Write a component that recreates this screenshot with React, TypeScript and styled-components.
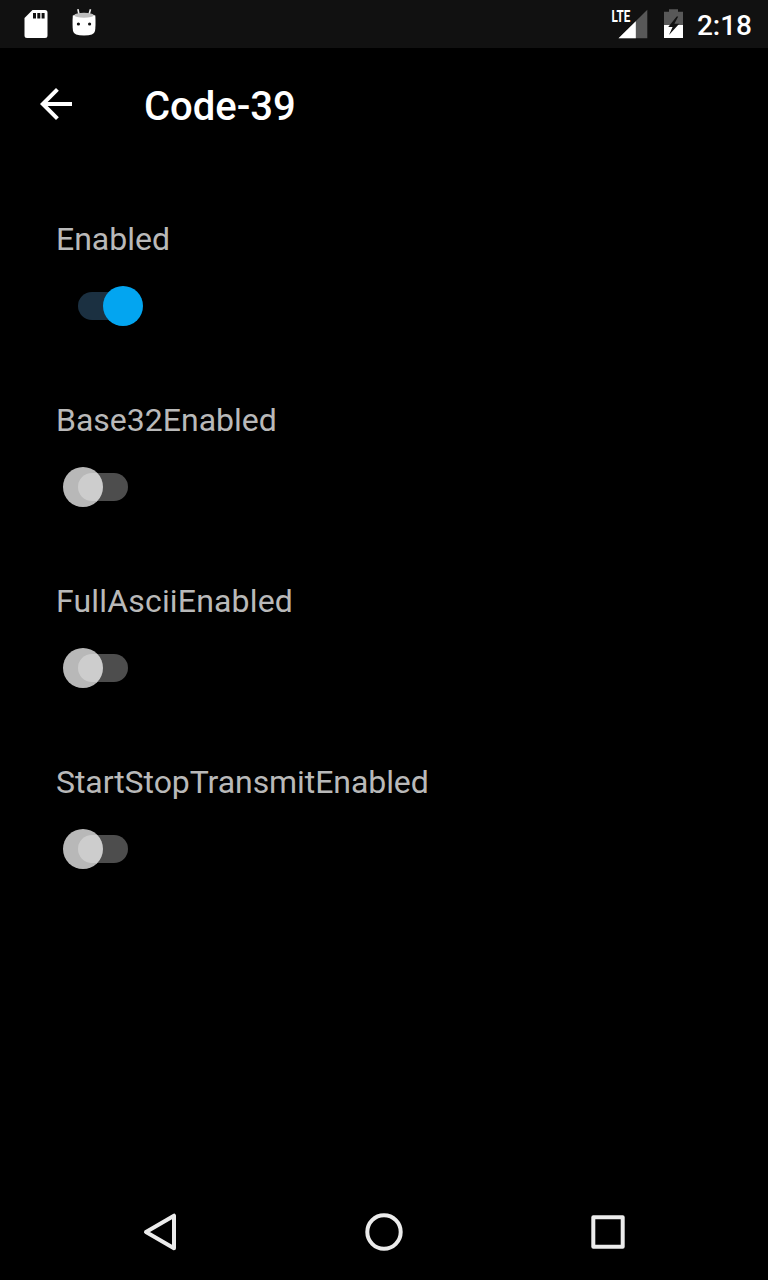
import React from "react";
import styled, { createGlobalStyle } from "styled-components";

const GlobalStyle = createGlobalStyle`
  html, body { margin: 0; background: #000; }
  * { box-sizing: border-box; }
  svg { display: block; flex: none; }
`;

const Screen = styled.div`
  display: flex;
  flex-direction: column;
  width: 768px;
  height: 1280px;
  background: #000;
  color: #fff;
  font-family: Roboto, sans-serif;
  overflow: hidden;
`;

const StatusBar = styled.header`
  display: flex;
  justify-content: space-between;
  height: 48px;
  padding: 0 16px 0 20px;
  background: #111;
`;

const StatusGroup = styled.div<{ $gap: number }>`
  display: flex;
  align-items: center;
  gap: ${({ $gap }) => $gap}px;
`;

const Clock = styled.time`
  padding-top: 3px;
  margin-left: -1px;
  font-size: 28px;
  font-weight: 500;
  line-height: 34px;
`;

const AppBar = styled.div`
  display: flex;
  align-items: center;
  gap: 64px;
  height: 112px;
  padding: 0 32px;
`;

const BackButton = styled.button`
  display: flex;
  width: 48px;
  height: 48px;
  padding: 0;
  border: 0;
  background: none;
  color: #fff;
`;

const Title = styled.h1`
  margin: 0;
  padding-top: 5px;
  font-size: 40px;
  font-weight: 500;
  line-height: 48px;
`;

const Settings = styled.main`
  display: flex;
  flex: 1;
  flex-direction: column;
  padding: 60px 56px 0;
`;

const Setting = styled.label`
  display: flex;
  flex-direction: column;
  gap: 28px;
  height: 181px;
`;

const SettingName = styled.span<{ $tracking: number }>`
  color: #b9b9b9;
  font-size: 32px;
  line-height: 38px;
  letter-spacing: ${({ $tracking }) => $tracking}px;
`;

const Switch = styled.span<{ $on: boolean }>`
  display: flex;
  align-items: center;
  width: 50px;
  height: 40px;
  margin-left: 22px;

  &::before {
    content: "";
    flex: none;
    width: 50px;
    height: 28px;
    border-radius: 14px;
    background: ${({ $on }) => ($on ? "#1b3041" : "#4d4d4d")};
  }

  &::after {
    content: "";
    flex: none;
    width: 40px;
    height: 40px;
    margin-left: ${({ $on }) => ($on ? -25 : -65)}px;
    border-radius: 50%;
    background: ${({ $on }) => ($on ? "#03a5f0" : "rgba(255, 255, 255, 0.72)")};
  }
`;

const NavBar = styled.nav`
  display: flex;
  align-items: center;
  justify-content: space-between;
  height: 96px;
  padding: 0 136px;
`;

const SdCardIcon = () => (
  <svg width="32" height="48" viewBox="0 0 32 48">
    <path
      fill="#fff"
      fillRule="evenodd"
      d="M12.5 10H25a2.5 2.5 0 0 1 2.5 2.5v23A2.5 2.5 0 0 1 25 38H7a2.5 2.5 0 0 1-2.5-2.5V18zM13 13v5.5h3V13zm4.3 0v5.5h3V13zm4.3 0v5.5h3V13z"
    />
  </svg>
);

const AndroidIcon = () => (
  <svg width="32" height="48" viewBox="0 0 32 48">
    <path d="M11 14.5 9.9 9.2M21 14.5l1.5-5.3" stroke="#eee" strokeWidth="1.6" fill="none" />
    <path d="M4.8 15.5Q16 11.5 27.3 15.5 27.9 25 27 31 26.2 35.6 16 35.6T5 31Q4.2 25 4.8 15.5z" fill="#fff" />
    <ellipse cx="16" cy="15.2" rx="9.8" ry="2.5" fill="#bdbdbd" />
    <circle cx="10.4" cy="24" r="1.6" fill="#111" />
    <circle cx="21.6" cy="24" r="1.6" fill="#111" />
  </svg>
);

const SignalIcon = () => (
  <svg width="38" height="48" viewBox="0 0 38 48">
    <path d="M37.3 9.8v28.5H8.5z" fill="#585858" />
    <path d="M25.8 21.2v17.1H8.5z" fill="#fff" />
    <text x="1.4" y="22.4" fill="#fff" fontSize="16.5" fontWeight="700" textLength="18.8" lengthAdjust="spacingAndGlyphs">
      LTE
    </text>
  </svg>
);

const BatteryIcon = () => (
  <svg width="22" height="48" viewBox="0 0 22 48">
    <path d="M7 9.3h9v2.4h5V25H2V11.7h5z" fill="#585858" />
    <path d="M2 25h19v13H2z" fill="#fff" />
    <path d="M14.7 16.5 6.2 27h4.4L7 35l10.2-11.2h-4.8l3.8-7.3z" fill="#111" />
  </svg>
);

const BackArrowIcon = () => (
  <svg width="48" height="48" viewBox="0 0 24 24">
    <path fill="currentColor" d="M20 11H7.83l5.59-5.59L12 4l-8 8 8 8 1.41-1.41L7.83 13H20v-2z" />
  </svg>
);

const NavIcon = ({ children }: { children: React.ReactNode }) => (
  <svg width="48" height="48" viewBox="0 0 48 48" fill="none" stroke="#ececec" strokeWidth="4" strokeLinejoin="round">
    {children}
  </svg>
);

const settings = [
  { name: "Enabled", on: true, tracking: 0 },
  { name: "Base32Enabled", on: false, tracking: 0 },
  { name: "FullAsciiEnabled", on: false, tracking: 0.17 },
  { name: "StartStopTransmitEnabled", on: false, tracking: -0.07 },
];

export default function App() {
  return (
    <Screen>
      <GlobalStyle />
      <StatusBar>
        <StatusGroup $gap={16}>
          <SdCardIcon />
          <AndroidIcon />
        </StatusGroup>
        <StatusGroup $gap={14}>
          <SignalIcon />
          <BatteryIcon />
          <Clock>2:18</Clock>
        </StatusGroup>
      </StatusBar>
      <AppBar>
        <BackButton aria-label="Back">
          <BackArrowIcon />
        </BackButton>
        <Title>Code-39</Title>
      </AppBar>
      <Settings>
        {settings.map(({ name, on, tracking }) => (
          <Setting key={name}>
            <SettingName $tracking={tracking}>{name}</SettingName>
            <Switch $on={on} role="switch" aria-checked={on} />
          </Setting>
        ))}
      </Settings>
      <NavBar>
        <NavIcon>
          <path d="M10 24 38 7.7v32.6z" />
        </NavIcon>
        <NavIcon>
          <circle cx="24" cy="24" r="16.7" />
        </NavIcon>
        <NavIcon>
          <path d="M9.3 9.3h29.4v29.4H9.3z" />
        </NavIcon>
      </NavBar>
    </Screen>
  );
}
